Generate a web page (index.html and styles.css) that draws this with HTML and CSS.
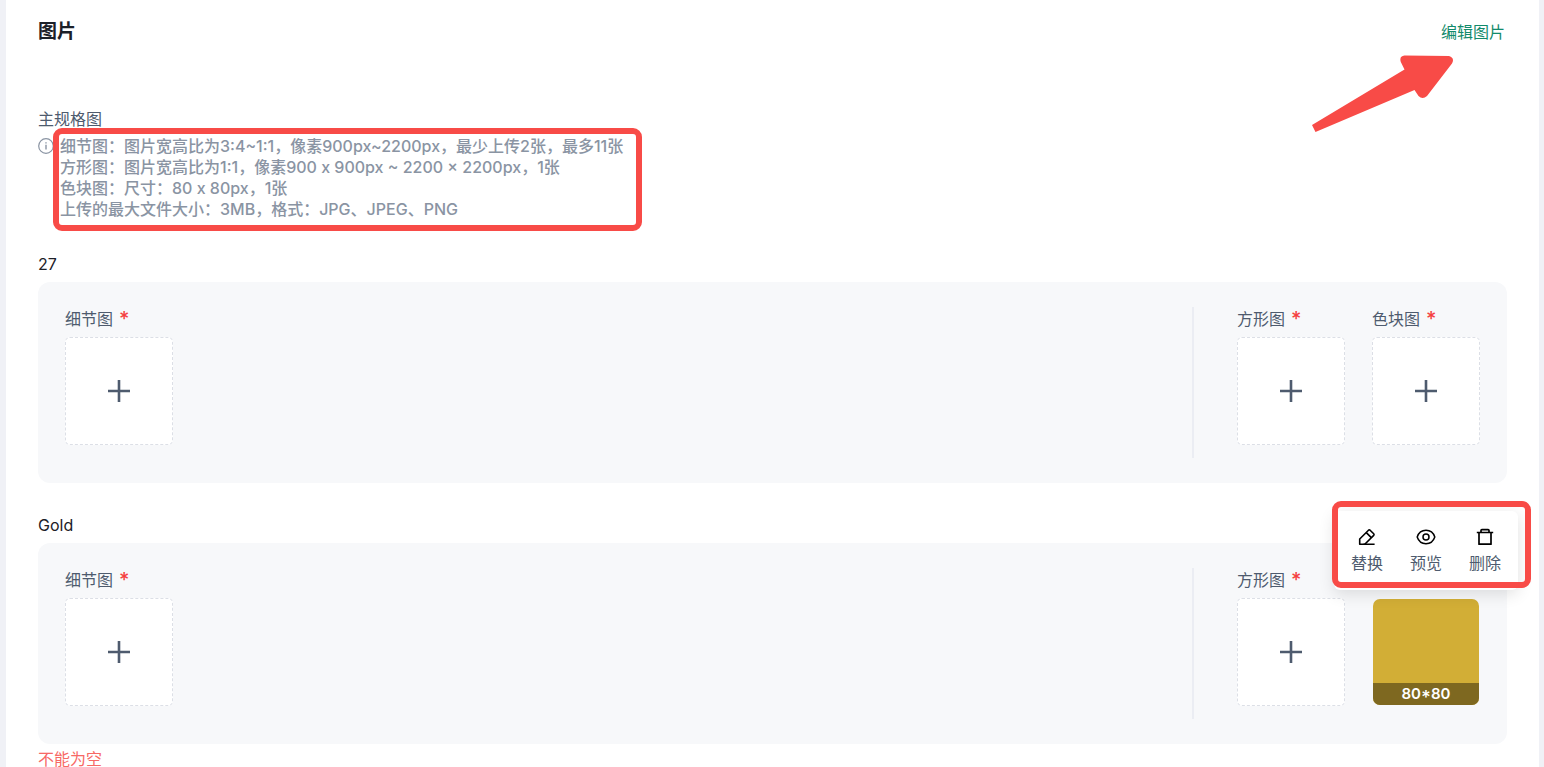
FILE: index.html
```html
<!DOCTYPE html>
<html lang="zh-CN">
<head>
<meta charset="utf-8">
<title>图片</title>
<link rel="stylesheet" href="styles.css">
</head>
<body>
<svg class="defs" aria-hidden="true">
  <symbol id="plus" viewBox="0 0 24 24"><path d="M12 1v22M1 12h22" fill="none" stroke="#4e5b6e" stroke-width="2.6"/></symbol>
</svg>
<main class="panel">
  <header class="panel-header">
    <h1 class="title">图片</h1>
    <a class="edit-link" href="#">编辑图片</a>
    <svg class="arrow" viewBox="0 0 144 78" aria-hidden="true">
      <path d="M2 71L94.500 15.500L90.800 8Q89 2 94.500 1.500L139 2Q145 4 142 9.500L117 42Q112.500 46 108.500 42L104.500 36L5.500 78Z" fill="#f84b47"/>
    </svg>
  </header>

  <section class="spec">
    <h2 class="spec-title">主规格图</h2>
    <div class="hint">
      <svg class="info" viewBox="0 0 16 16" aria-hidden="true">
        <circle cx="8" cy="8" r="7.300" fill="none" stroke="#8a94a3" stroke-width="1.200"/>
        <path d="M8 6.800V11.600M8 4.200V5.500" fill="none" stroke="#8a94a3" stroke-width="1.400"/>
      </svg>
      <div class="hint-text">
        <p>细节图：图片宽高比为3:4~1:1，像素900px~2200px，最少上传2张，最多11张</p>
        <p>方形图：图片宽高比为1:1，像素900 x 900px ~ 2200 × 2200px，1张</p>
        <p>色块图：尺寸：80 x 80px，1张</p>
        <p>上传的最大文件大小：3MB，格式：JPG、JPEG、PNG</p>
      </div>
    </div>
  </section>

  <div class="variants">
  <section class="variant">
    <h3 class="variant-name">27</h3>
    <div class="card">
      <div class="slot">
        <span class="slot-label" id="a1">细节图 <span class="required">*</span></span>
        <button class="upload" type="button" aria-labelledby="a1"><svg class="plus"><use href="#plus"/></svg></button>
      </div>
      <div class="side">
        <div class="slot">
          <span class="slot-label" id="a2">方形图 <span class="required">*</span></span>
          <button class="upload" type="button" aria-labelledby="a2"><svg class="plus"><use href="#plus"/></svg></button>
        </div>
        <div class="slot">
          <span class="slot-label" id="a3">色块图 <span class="required">*</span></span>
          <button class="upload" type="button" aria-labelledby="a3"><svg class="plus"><use href="#plus"/></svg></button>
        </div>
      </div>
    </div>
  </section>

  <section class="variant">
    <h3 class="variant-name">Gold</h3>
    <div class="card">
      <div class="slot">
        <span class="slot-label" id="b1">细节图 <span class="required">*</span></span>
        <button class="upload" type="button" aria-labelledby="b1"><svg class="plus"><use href="#plus"/></svg></button>
      </div>
      <div class="side">
        <div class="slot">
          <span class="slot-label" id="b2">方形图 <span class="required">*</span></span>
          <button class="upload" type="button" aria-labelledby="b2"><svg class="plus"><use href="#plus"/></svg></button>
        </div>
        <div class="slot slot-filled">
          <div class="swatch"><span class="swatch-size">80*80</span></div>
          <div class="menu">
            <button class="action" type="button">
              <svg class="action-icon" viewBox="0 0 20 20" aria-hidden="true"><g fill="none" stroke="#000" stroke-width="1.600" stroke-linejoin="round"><path d="M2.700 17.200V12L11.500 3.200Q12.300 2.500 13.100 3.200L16.700 6.800Q17.400 7.600 16.700 8.400L7.800 17.200Z"/><path d="M9.300 5.600L14.300 10.600M6.500 17.200H17.600"/></g></svg>
              <span>替换</span>
            </button>
            <button class="action" type="button">
              <svg class="action-icon" viewBox="0 0 20 20" aria-hidden="true"><g fill="none" stroke="#000" stroke-width="1.500"><path d="M1.200 10C2.700 5.500 6 3.300 10 3.300S17.300 5.500 18.800 10C17.300 14.500 14 16.700 10 16.700S2.700 14.500 1.200 10Z"/><circle cx="10" cy="10" r="3"/></g></svg>
              <span>预览</span>
            </button>
            <button class="action" type="button">
              <svg class="action-icon" viewBox="0 0 20 20" aria-hidden="true"><g fill="none" stroke="#000" stroke-width="1.700" stroke-linejoin="round"><path d="M1.800 5.500H18.200M4 5.500V17.200H16V5.500M6 5.500V3.600Q6 2.700 6.900 2.700H13.100Q14 2.700 14 3.600V5.500"/></g></svg>
              <span>删除</span>
            </button>
          </div>
        </div>
      </div>
    </div>
    <p class="error">不能为空</p>
  </section>
  </div>
</main>
</body>
</html>
```
FILE: styles.css
```css
* {
  box-sizing: border-box;
}

body {
  margin: 0;
  background: #f0f1f6;
  color: #1c2028;
  font: 400 16px/24px Inter, "Noto Sans CJK SC", sans-serif;
}

h1, h2, h3, p {
  margin: 0;
  font-size: 16px;
  font-weight: 400;
}

.defs {
  position: absolute;
  width: 0;
  height: 0;
}

.panel {
  min-height: 100vh;
  margin: 0 5px 0 6px;
  padding: 20px 32px 0;
  background: #fff;
}

.panel-header {
  position: relative;
  display: flex;
  align-items: center;
  justify-content: space-between;
}

.title {
  font-size: 19px;
  font-weight: 700;
}

.edit-link {
  margin-right: 2px;
  color: #128a6b;
  text-decoration: none;
}

.arrow {
  position: absolute;
  top: 34px;
  right: 53px;
  width: 144px;
  height: 78px;
}

.spec {
  margin-top: 63px;
}

.spec-title {
  color: #4e5b6e;
}

.hint {
  display: flex;
  gap: 6px;
  margin-top: 5px;
  color: #8a94a3;
  line-height: 21px;
}

.info {
  width: 16px;
  height: 16px;
  margin-top: 2px;
}

.hint-text {
  position: relative;
}

.hint-text p {
  font-weight: 500;
}

.hint-text::after {
  content: "";
  position: absolute;
  inset: -8px -19px -11px -7px;
  border: 6px solid #f84b47;
  border-radius: 9px;
}

.variants {
  display: flex;
  flex-direction: column;
  gap: 30px;
  margin-top: 32px;
}

.variant-name {
  margin-bottom: 6px;
}

.card {
  display: flex;
  justify-content: space-between;
  padding: 25px 27px;
  border-radius: 12px;
  background: #f7f8fa;
}

.side {
  display: flex;
  gap: 27px;
  padding-left: 43px;
  border-left: 2px solid #ebedf3;
}

.slot {
  position: relative;
  display: flex;
  flex-direction: column;
  gap: 6px;
  width: 108px;
  padding-bottom: 13px;
  color: #4e5b6e;
}

.slot-filled {
  justify-content: flex-end;
}

.slot-label {
  display: flex;
  gap: 6px;
  height: 24px;
}

.required {
  color: #f53f3f;
  font-size: 20px;
  font-weight: 500;
}

.upload {
  display: grid;
  place-items: center;
  height: 108px;
  padding: 0;
  border: 1px dashed #dcdfe6;
  border-radius: 5px;
  background: #fff;
}

.plus {
  width: 24px;
  height: 24px;
}

.swatch {
  display: flex;
  align-items: flex-end;
  height: 106px;
  margin: 1px;
  overflow: hidden;
  border-radius: 7px;
  background: #d2ae36;
}

.swatch-size {
  flex: 1;
  background: #7e6820;
  color: #fff;
  font-size: 15px;
  font-weight: 600;
  line-height: 22px;
  text-align: center;
}

.menu {
  position: absolute;
  bottom: 129px;
  left: -38px;
  display: flex;
  justify-content: center;
  gap: 27px;
  width: 184px;
  padding: 16px 0 15px;
  border-radius: 6px;
  background: #fff;
  box-shadow: 0 4px 16px rgb(0 0 0 / 12%);
}

.menu::after {
  content: "";
  position: absolute;
  inset: -10px -13px 2px -2px;
  border: 6px solid #f84b47;
  border-radius: 9px;
  pointer-events: none;
}

.action {
  display: flex;
  flex-direction: column;
  align-items: center;
  gap: 4px;
  padding: 0;
  border: 0;
  background: none;
  color: #4e5b6e;
  font: inherit;
}

.action-icon {
  width: 20px;
  height: 20px;
}

.error {
  margin-top: 7px;
  color: #f76965;
  line-height: 16px;
}
```
